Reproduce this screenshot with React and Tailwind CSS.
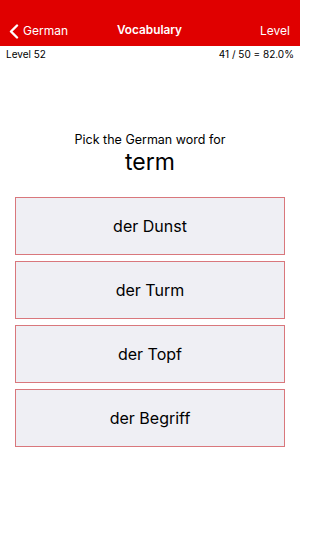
function Choice({ word }) {
  return (
    <button className="w-full h-[58px] bg-[#efeff4] border border-[#d9777c] flex items-center justify-center text-[16px] text-black">
      {word}
    </button>
  );
}

export default function App() {
  const words = ["der Dunst", "der Turm", "der Topf", "der Begriff"];
  return (
    <div className="w-[300px] h-[533px] bg-white flex flex-col" style={{ fontFamily: '"Inter", "Liberation Sans", sans-serif' }}>
      <header className="h-[46px] bg-[#e00000] flex items-end pb-[6px] px-[9px] text-white">
        <div className="flex-1 flex items-center gap-[4px] text-[12px]">
          <svg width="10" height="15" viewBox="0 0 10 15" fill="none">
            <path d="M8 1.5 2 7.5l6 6" stroke="white" strokeWidth="2.4" strokeLinecap="round" strokeLinejoin="round" />
          </svg>
          <span>German</span>
        </div>
        <div className="text-[11.8px] font-semibold">Vocabulary</div>
        <div className="flex-1 text-right text-[12px] pr-[1px]">Level</div>
      </header>
      <div className="flex justify-between px-[6px] pt-[1px] text-[10px] text-black">
        <span>Level 52</span>
        <span>41 / 50 = 82.0%</span>
      </div>
      <div className="mt-[70px] flex flex-col items-center text-black">
        <p className="text-[12.5px] leading-[16px]">Pick the German word for</p>
        <p className="text-[23px] leading-[28px]">term</p>
      </div>
      <div className="mt-[21px] px-[15px] flex flex-col gap-[6px]">
        {words.map((w) => (
          <Choice key={w} word={w} />
        ))}
      </div>
    </div>
  );
}
